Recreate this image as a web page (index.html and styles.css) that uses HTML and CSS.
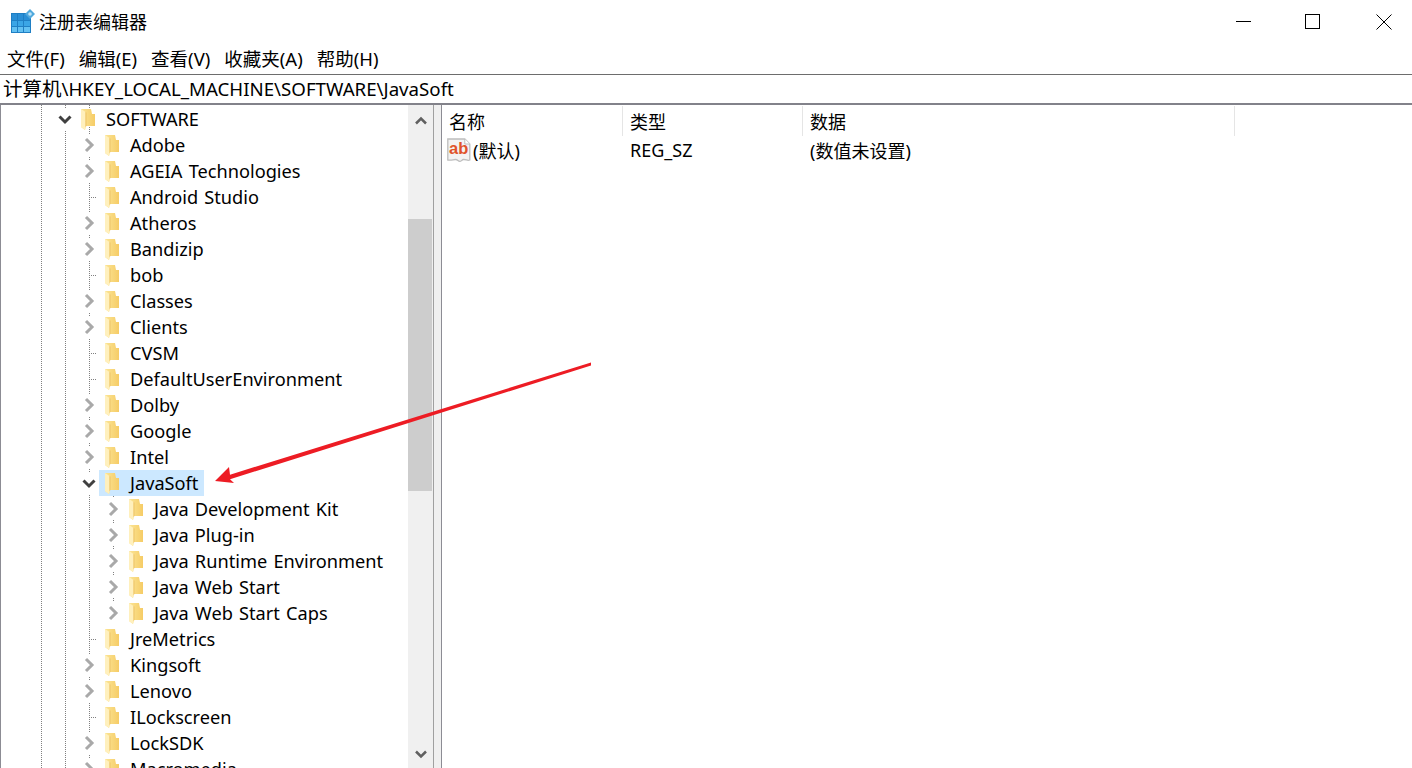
FILE: index.html
```html
<!DOCTYPE html>
<html lang="zh">
<head>
<meta charset="utf-8">
<title>注册表编辑器</title>
<link rel="stylesheet" href="styles.css">
</head>
<body>
<div class="window">
  <header class="titlebar">
    <svg class="appicon" width="24" height="25" viewBox="0 -1 24 25">
      <rect x="0" y="3" width="20" height="20" fill="#1f7fc4"/>
      <path d="M1 10h5v-6h-5zM7 10h5v-6h-5zM13 10h6v-6h-6z" fill="#2a8fd6"/>
      <path d="M1 16h5v-5h-5zM7 16h5v-5h-5zM13 16h6v-5h-6z" fill="#3aa5e6"/>
      <path d="M1 22h5v-5h-5zM7 22h5v-5h-5zM13 22h6v-5h-6z" fill="#62c0f2"/>
      <path d="M19 -1l5 5-5 5-5-5z" fill="#4fa8dc"/>
      <circle cx="19" cy="4" r="1.800" fill="#bfe3f7"/>
    </svg>
    <span class="title">注册表编辑器</span>
    <div class="controls">
      <svg width="16" height="16" viewBox="0 0 16 16"><path d="M0 7.500h15" stroke="#000" fill="none"/></svg>
      <svg width="16" height="16" viewBox="0 0 16 16"><rect x="0.500" y="0.500" width="14" height="14" stroke="#000" fill="none"/></svg>
      <svg class="close" width="16" height="16" viewBox="0 0 16 16"><path d="M0.500 0.500l15 15M15.500 0.500l-15 15" stroke="#000" fill="none"/></svg>
    </div>
  </header>
  <nav class="menubar">
    <span>文件(F)</span><span>编辑(E)</span><span>查看(V)</span><span>收藏夹(A)</span><span>帮助(H)</span>
  </nav>
  <div class="address"><em>计算机</em>\HKEY_LOCAL_MACHINE\SOFTWARE\JavaSoft</div>
  <main class="panes">
    <section class="treepane">
      <div class="tree">
        <i class="guide g1"></i><i class="guide g2"></i><i class="guide g3"></i><i class="guide g4"></i>
        <div class="row l1 open"><svg class="tw" viewBox="0 0 16 16"><path d="M2.500 5.500l5.500 5.500 5.500-5.500"/></svg><svg class="fd" viewBox="0 0 14 21"><use href="#folder"/></svg><span>SOFTWARE</span></div>
        <div class="row l2"><svg class="tw" viewBox="0 0 16 16"><path d="M5 2l6 6-6 6"/></svg><svg class="fd" viewBox="0 0 14 21"><use href="#folder"/></svg><span>Adobe</span></div>
        <div class="row l2"><svg class="tw" viewBox="0 0 16 16"><path d="M5 2l6 6-6 6"/></svg><svg class="fd" viewBox="0 0 14 21"><use href="#folder"/></svg><span>AGEIA Technologies</span></div>
        <div class="row l2 leaf"><i class="tick"></i><svg class="fd" viewBox="0 0 14 21"><use href="#folder"/></svg><span>Android Studio</span></div>
        <div class="row l2"><svg class="tw" viewBox="0 0 16 16"><path d="M5 2l6 6-6 6"/></svg><svg class="fd" viewBox="0 0 14 21"><use href="#folder"/></svg><span>Atheros</span></div>
        <div class="row l2"><svg class="tw" viewBox="0 0 16 16"><path d="M5 2l6 6-6 6"/></svg><svg class="fd" viewBox="0 0 14 21"><use href="#folder"/></svg><span>Bandizip</span></div>
        <div class="row l2 leaf"><i class="tick"></i><svg class="fd" viewBox="0 0 14 21"><use href="#folder"/></svg><span>bob</span></div>
        <div class="row l2"><svg class="tw" viewBox="0 0 16 16"><path d="M5 2l6 6-6 6"/></svg><svg class="fd" viewBox="0 0 14 21"><use href="#folder"/></svg><span>Classes</span></div>
        <div class="row l2"><svg class="tw" viewBox="0 0 16 16"><path d="M5 2l6 6-6 6"/></svg><svg class="fd" viewBox="0 0 14 21"><use href="#folder"/></svg><span>Clients</span></div>
        <div class="row l2 leaf"><i class="tick"></i><svg class="fd" viewBox="0 0 14 21"><use href="#folder"/></svg><span>CVSM</span></div>
        <div class="row l2 leaf"><i class="tick"></i><svg class="fd" viewBox="0 0 14 21"><use href="#folder"/></svg><span>DefaultUserEnvironment</span></div>
        <div class="row l2"><svg class="tw" viewBox="0 0 16 16"><path d="M5 2l6 6-6 6"/></svg><svg class="fd" viewBox="0 0 14 21"><use href="#folder"/></svg><span>Dolby</span></div>
        <div class="row l2"><svg class="tw" viewBox="0 0 16 16"><path d="M5 2l6 6-6 6"/></svg><svg class="fd" viewBox="0 0 14 21"><use href="#folder"/></svg><span>Google</span></div>
        <div class="row l2"><svg class="tw" viewBox="0 0 16 16"><path d="M5 2l6 6-6 6"/></svg><svg class="fd" viewBox="0 0 14 21"><use href="#folder"/></svg><span>Intel</span></div>
        <div class="row l2 open sel"><svg class="tw" viewBox="0 0 16 16"><path d="M2.500 5.500l5.500 5.500 5.500-5.500"/></svg><svg class="fd" viewBox="0 0 14 21"><use href="#folder"/></svg><span>JavaSoft</span></div>
        <div class="row l3"><svg class="tw" viewBox="0 0 16 16"><path d="M5 2l6 6-6 6"/></svg><svg class="fd" viewBox="0 0 14 21"><use href="#folder"/></svg><span>Java Development Kit</span></div>
        <div class="row l3"><svg class="tw" viewBox="0 0 16 16"><path d="M5 2l6 6-6 6"/></svg><svg class="fd" viewBox="0 0 14 21"><use href="#folder"/></svg><span>Java Plug-in</span></div>
        <div class="row l3"><svg class="tw" viewBox="0 0 16 16"><path d="M5 2l6 6-6 6"/></svg><svg class="fd" viewBox="0 0 14 21"><use href="#folder"/></svg><span>Java Runtime Environment</span></div>
        <div class="row l3"><svg class="tw" viewBox="0 0 16 16"><path d="M5 2l6 6-6 6"/></svg><svg class="fd" viewBox="0 0 14 21"><use href="#folder"/></svg><span>Java Web Start</span></div>
        <div class="row l3"><svg class="tw" viewBox="0 0 16 16"><path d="M5 2l6 6-6 6"/></svg><svg class="fd" viewBox="0 0 14 21"><use href="#folder"/></svg><span>Java Web Start Caps</span></div>
        <div class="row l2 leaf"><i class="tick"></i><svg class="fd" viewBox="0 0 14 21"><use href="#folder"/></svg><span>JreMetrics</span></div>
        <div class="row l2"><svg class="tw" viewBox="0 0 16 16"><path d="M5 2l6 6-6 6"/></svg><svg class="fd" viewBox="0 0 14 21"><use href="#folder"/></svg><span>Kingsoft</span></div>
        <div class="row l2"><svg class="tw" viewBox="0 0 16 16"><path d="M5 2l6 6-6 6"/></svg><svg class="fd" viewBox="0 0 14 21"><use href="#folder"/></svg><span>Lenovo</span></div>
        <div class="row l2 leaf"><i class="tick"></i><svg class="fd" viewBox="0 0 14 21"><use href="#folder"/></svg><span>ILockscreen</span></div>
        <div class="row l2"><svg class="tw" viewBox="0 0 16 16"><path d="M5 2l6 6-6 6"/></svg><svg class="fd" viewBox="0 0 14 21"><use href="#folder"/></svg><span>LockSDK</span></div>
        <div class="row l2"><svg class="tw" viewBox="0 0 16 16"><path d="M5 2l6 6-6 6"/></svg><svg class="fd" viewBox="0 0 14 21"><use href="#folder"/></svg><span>Macromedia</span></div>
      </div>
      <div class="scrollbar">
        <svg class="sa up" viewBox="0 0 14 10"><path d="M2 7.500l5-5 5 5"/></svg>
        <div class="track"><div class="thumb"></div></div>
        <svg class="sa down" viewBox="0 0 14 10"><path d="M2 2.500l5 5 5-5"/></svg>
      </div>
    </section>
    <section class="listpane">
      <div class="listhead">
        <div class="col c1">名称</div><div class="col c2">类型</div><div class="col c3">数据</div>
      </div>
      <div class="listrow">
        <div class="c1 cell">
          <svg class="ab" width="24" height="24" viewBox="0 0 24 24">
            <path d="M.8 1h17l5 5v16c-2.500 1.200-3.500-.8-6.500-.5-1.500.2-1.500 2-3.500 1.800s-2-2-4.500-1.800-4 1-7.500.5z" fill="#f3f3f3" stroke="#bdbdbd" stroke-width="1.300"/>
            <path d="M17.800 1v5h5" fill="#fff" stroke="#bdbdbd"/>
            <text x="2" y="16" class="abtext">ab</text>
          </svg>
          <span>(默认)</span>
        </div>
        <div class="c2 cell">REG_SZ</div>
        <div class="c3 cell">(数值未设置)</div>
      </div>
    </section>
  </main>
  <svg class="arrow" width="400" height="140" viewBox="0 0 400 140">
    <path d="M381 7.500L20 119.700 19 112 5 126 24 128 20 124.300 381 10.500z" fill="#ed1c24"/>
  </svg>
</div>
<svg class="defs" width="0" height="0">
  <defs>
    <linearGradient id="fg" x1="0" x2="1" y1="0" y2="0">
      <stop offset="0" stop-color="#fbe596"/><stop offset="1" stop-color="#f6cc66"/>
    </linearGradient>
    <symbol id="folder" viewBox="0 0 14 21">
      <path d="M0 0h10l1 5h3v12h-9l-1 4-4-3z" fill="url(#fg)"/>
      <path d="M0 0l4.500 3v15l-.5 3-4-3z" fill="#fff0bd"/>
      <path d="M4.500 3v15l1-1V3.500z" fill="#eec468"/>
    </symbol>
  </defs>
</svg>
</body>
</html>
```
FILE: styles.css
```css
* { box-sizing: border-box; }
html, body { margin: 0; height: 100%; overflow: hidden; background: #fff; }
body { font-family: "Noto Sans", "Noto Sans CJK SC", sans-serif; font-size: 18px; color: #000; }
em { font-style: normal; font-family: "Noto Sans CJK SC", sans-serif; }
.window { position: relative; width: 1412px; height: 768px; display: flex; flex-direction: column; overflow: hidden; }
.titlebar { height: 44px; display: flex; align-items: flex-start; padding: 9px 0 0 11px; flex: none; }
.appicon { flex: none; }
.title { margin-left: 4px; font-family: "Noto Sans CJK SC", sans-serif; font-size: 18px; line-height: 24px; }
.controls { margin-left: auto; margin-top: 5px; display: flex; gap: 53px; padding-right: 20px; }
.close { margin-left: 2px; }
.menubar { height: 30px; display: flex; padding: 0 0 2px 7px; gap: 14px; align-items: center; flex: none; font-size: 18.500px; background: #fff; }
.address { height: 31px; flex: none; border-top: 1px solid #6d6d6d; border-bottom: 2px solid #82828a; padding-left: 3px; line-height: 26px; font-size: 18.700px; white-space: nowrap; background: #fff; }
.address em { font-size: 19.500px; }
.panes { flex: 1; display: flex; min-height: 0; }
.treepane { width: 442px; flex: none; display: flex; border-left: 1px solid #8c8c94; border-right: 1px solid #8c8c94; padding-right: 7px; background: #f0f0f0; }
.tree { position: relative; flex: 1; padding-top: 1px; overflow: hidden; min-width: 0; background: #fff; }
.guide { position: absolute; width: 1px; background-image: linear-gradient(#808080 50%, transparent 50%); background-size: 1px 2px; }
.g1 { left: 40px; top: 0; bottom: 0; }
.g2 { left: 64px; top: 0; bottom: 0; }
.g3 { left: 88px; top: 0; bottom: 0; }
.g4 { left: 112px; top: 391px; height: 117px; }
.row { position: relative; height: 26px; display: flex; align-items: center; white-space: nowrap; word-spacing: 1.500px; font-size: 18.200px; }
.row.l1 { padding-left: 56px; }
.row.l2 { padding-left: 80px; }
.row.l3 { padding-left: 104px; }
.tw { width: 16px; height: 22px; flex: none; fill: none; stroke: #a9a9a9; stroke-width: 3; position: relative; background: #fff; }
.open .tw { stroke: #404040; }
.tick { flex: none; width: 8px; height: 1px; margin-left: 8px; background-image: linear-gradient(90deg, #808080 50%, transparent 50%); background-size: 2px 1px; }
.fd { width: 14px; height: 21px; flex: none; margin-left: 8px; margin-right: 11px; position: relative; }
.row span { position: relative; }
.sel::before { content: ""; position: absolute; left: 98px; width: 105px; top: 0; bottom: 0; background: #cce8ff; }
.scrollbar { width: 26px; flex: none; background: #f0f0f0; border-right: 1px solid #a0a0a0; display: flex; flex-direction: column; align-items: center; }
.sa { width: 14px; height: 10px; flex: none; fill: none; stroke: #606060; stroke-width: 2.500; }
.sa.up { margin: 11px 0 10px; }
.sa.down { margin-bottom: 9px; }
.track { flex: 1; width: 100%; }
.thumb { width: 24px; margin-top: 83px; height: 272px; background: #cdcdcd; }
.listpane { flex: 1; min-width: 0; }
.listhead { height: 31px; display: flex; padding-top: 1px; }
.col { height: 30px; padding-left: 7px; line-height: 32px; border-right: 1px solid #e5e5e5; font-size: 18px; }
.c1 { width: 181px; flex: none; }
.c2 { width: 180px; flex: none; }
.c3 { width: 432px; flex: none; }
.listrow { display: flex; height: 28px; align-items: center; }
.cell { padding-left: 7px; white-space: nowrap; display: flex; align-items: center; }
.cell.c1 { padding-left: 5px; }
.ab { flex: none; margin-right: 2px; }
.abtext { font-family: "Liberation Sans", sans-serif; font-weight: 700; font-size: 16.500px; fill: #e0532a; }
.arrow { position: absolute; left: 210px; top: 355px; }
.defs { position: absolute; }
```
